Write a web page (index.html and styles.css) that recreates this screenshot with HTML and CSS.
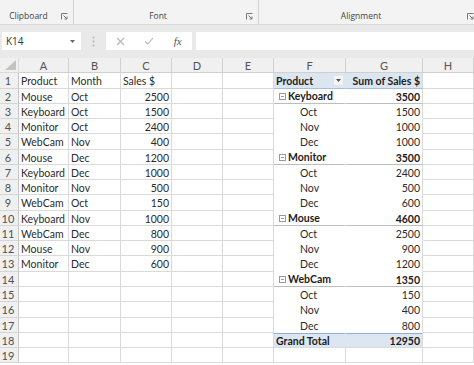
FILE: index.html
```html
<!DOCTYPE html>
<html lang="en">
<head>
<meta charset="UTF-8" />
<meta name="viewport" content="width=device-width, initial-scale=1" />
<title>Pivot Table - Sales</title>
<link rel="stylesheet" href="styles.css">
</head>
<body>

<div class="ribbon">
  <div class="rgroup g1">
    <span class="rlabel">Clipboard</span>
    <svg class="launcher" width="7" height="7" viewBox="0 0 7 7"><path d="M0.5 6.5V0.5H6.5" /><path d="M2.5 2.5L6 6M6 3.5V6H3.5" /></svg>
  </div>
  <div class="rgroup g2">
    <span class="rlabel">Font</span>
    <svg class="launcher" width="7" height="7" viewBox="0 0 7 7"><path d="M0.5 6.5V0.5H6.5" /><path d="M2.5 2.5L6 6M6 3.5V6H3.5" /></svg>
  </div>
  <div class="rgroup g3">
    <span class="rlabel">Alignment</span>
    <svg class="launcher" width="7" height="7" viewBox="0 0 7 7"><path d="M0.5 6.5V0.5H6.5" /><path d="M2.5 2.5L6 6M6 3.5V6H3.5" /></svg>
  </div>
</div>

<div class="fbar">
  <div class="namebox">
    <span>K14</span>
    <svg width="5" height="3" viewBox="0 0 5 3"><path d="M0 0H5L2.5 3Z" fill="#666" /></svg>
  </div>
  <div class="grip">
    <svg width="3" height="11" viewBox="0 0 3 11"><circle cx="1.5" cy="1.5" r="1" /><circle cx="1.5" cy="5.5" r="1" /><circle cx="1.5" cy="9.5" r="1" /></svg>
  </div>
  <div class="fxbox">
    <span class="fxbtn"><svg width="9" height="9" viewBox="0 0 9 9"><path d="M1 1L8 8M8 1L1 8" /></svg></span>
    <span class="fxbtn"><svg width="10" height="8" viewBox="0 0 10 8"><path d="M1 4.5L3.8 7L9 1" /></svg></span>
    <span class="fxbtn fx">fx</span>
  </div>
  <div class="finput"></div>
</div>

<div class="sheet">
  <!-- column headers -->
  <div class="corner"><svg width="11" height="10" viewBox="0 0 11 10"><path d="M11 0V10H0Z" fill="#c3c3c3" /></svg></div>
  <div class="ch">A</div><div class="ch">B</div><div class="ch">C</div><div class="ch">D</div>
  <div class="ch">E</div><div class="ch">F</div><div class="ch">G</div><div class="ch">H</div>

  <div class="rh">1</div>
  <div class="c">Product</div><div class="c">Month</div><div class="c">Sales $</div><div class="c"></div><div class="c"></div>
  <div class="c pf ph"><span>Product</span><span class="dd"><svg width="5" height="3" viewBox="0 0 5 3"><path d="M0 0H5L2.5 3Z" fill="#555" /></svg></span></div>
  <div class="c pg ph">Sum of Sales $</div><div class="c"></div>

  <div class="rh">2</div>
  <div class="c">Mouse</div><div class="c">Oct</div><div class="c r">2500</div><div class="c"></div><div class="c"></div>
  <div class="c pf grp"><svg class="minus" width="7" height="7" viewBox="0 0 7 7"><rect x="0.5" y="0.5" width="6" height="6" /><path d="M2 3.5H5" /></svg>Keyboard</div>
  <div class="c pg grp">3500</div><div class="c"></div>

  <div class="rh">3</div>
  <div class="c">Keyboard</div><div class="c">Oct</div><div class="c r">1500</div><div class="c"></div><div class="c"></div>
  <div class="c pf sub">Oct</div><div class="c pg">1500</div><div class="c"></div>

  <div class="rh">4</div>
  <div class="c">Monitor</div><div class="c">Oct</div><div class="c r">2400</div><div class="c"></div><div class="c"></div>
  <div class="c pf sub">Nov</div><div class="c pg">1000</div><div class="c"></div>

  <div class="rh">5</div>
  <div class="c">WebCam</div><div class="c">Nov</div><div class="c r">400</div><div class="c"></div><div class="c"></div>
  <div class="c pf sub">Dec</div><div class="c pg">1000</div><div class="c"></div>

  <div class="rh">6</div>
  <div class="c">Mouse</div><div class="c">Dec</div><div class="c r">1200</div><div class="c"></div><div class="c"></div>
  <div class="c pf grp"><svg class="minus" width="7" height="7" viewBox="0 0 7 7"><rect x="0.5" y="0.5" width="6" height="6" /><path d="M2 3.5H5" /></svg>Monitor</div>
  <div class="c pg grp">3500</div><div class="c"></div>

  <div class="rh">7</div>
  <div class="c">Keyboard</div><div class="c">Dec</div><div class="c r">1000</div><div class="c"></div><div class="c"></div>
  <div class="c pf sub">Oct</div><div class="c pg">2400</div><div class="c"></div>

  <div class="rh">8</div>
  <div class="c">Monitor</div><div class="c">Nov</div><div class="c r">500</div><div class="c"></div><div class="c"></div>
  <div class="c pf sub">Nov</div><div class="c pg">500</div><div class="c"></div>

  <div class="rh">9</div>
  <div class="c">WebCam</div><div class="c">Oct</div><div class="c r">150</div><div class="c"></div><div class="c"></div>
  <div class="c pf sub">Dec</div><div class="c pg">600</div><div class="c"></div>

  <div class="rh">10</div>
  <div class="c">Keyboard</div><div class="c">Nov</div><div class="c r">1000</div><div class="c"></div><div class="c"></div>
  <div class="c pf grp"><svg class="minus" width="7" height="7" viewBox="0 0 7 7"><rect x="0.5" y="0.5" width="6" height="6" /><path d="M2 3.5H5" /></svg>Mouse</div>
  <div class="c pg grp">4600</div><div class="c"></div>

  <div class="rh">11</div>
  <div class="c">WebCam</div><div class="c">Dec</div><div class="c r">800</div><div class="c"></div><div class="c"></div>
  <div class="c pf sub">Oct</div><div class="c pg">2500</div><div class="c"></div>

  <div class="rh">12</div>
  <div class="c">Mouse</div><div class="c">Nov</div><div class="c r">900</div><div class="c"></div><div class="c"></div>
  <div class="c pf sub">Nov</div><div class="c pg">900</div><div class="c"></div>

  <div class="rh">13</div>
  <div class="c">Monitor</div><div class="c">Dec</div><div class="c r">600</div><div class="c"></div><div class="c"></div>
  <div class="c pf sub">Dec</div><div class="c pg">1200</div><div class="c"></div>

  <div class="rh">14</div>
  <div class="c"></div><div class="c"></div><div class="c"></div><div class="c"></div><div class="c"></div>
  <div class="c pf grp"><svg class="minus" width="7" height="7" viewBox="0 0 7 7"><rect x="0.5" y="0.5" width="6" height="6" /><path d="M2 3.5H5" /></svg>WebCam</div>
  <div class="c pg grp">1350</div><div class="c"></div>

  <div class="rh">15</div>
  <div class="c"></div><div class="c"></div><div class="c"></div><div class="c"></div><div class="c"></div>
  <div class="c pf sub">Oct</div><div class="c pg">150</div><div class="c"></div>

  <div class="rh">16</div>
  <div class="c"></div><div class="c"></div><div class="c"></div><div class="c"></div><div class="c"></div>
  <div class="c pf sub">Nov</div><div class="c pg">400</div><div class="c"></div>

  <div class="rh">17</div>
  <div class="c"></div><div class="c"></div><div class="c"></div><div class="c"></div><div class="c"></div>
  <div class="c pf sub">Dec</div><div class="c pg">800</div><div class="c"></div>

  <div class="rh">18</div>
  <div class="c"></div><div class="c"></div><div class="c"></div><div class="c"></div><div class="c"></div>
  <div class="c pf tot">Grand Total</div><div class="c pg tot">12950</div><div class="c"></div>

  <div class="rh">19</div>
  <div class="c"></div><div class="c"></div><div class="c"></div><div class="c"></div><div class="c"></div>
  <div class="c"></div><div class="c"></div><div class="c"></div>
</div>

</body>
</html>
```

FILE: styles.css
```css
* {
  box-sizing: border-box;
}
body {
  margin: 0;
  width: 474px;
  height: 365px;
  overflow: hidden;
  background: #fff;
  font-family: Lato, 'Liberation Sans', sans-serif;
  color: #2b2b2b;
}

/* Ribbon group labels */
.ribbon {
  display: flex;
  height: 25px;
  background: #f3f3f3;
  border-bottom: 1px solid #d9d9d9;
  overflow: hidden;
}
.rgroup {
  display: flex;
  align-items: flex-end;
  flex-shrink: 0;
  padding-bottom: 3px;
  border-right: 1px solid #d2d2d2;
}
.g1 { width: 74px; }
.g2 { width: 185px; }
.g3 { width: 221px; }
.rlabel {
  flex: 1;
  text-align: center;
  font-family: 'Open Sans', sans-serif;
  font-size: 8.5px;
  line-height: 10px;
  color: #444;
  padding-right: 4px;
}
.launcher {
  margin: 0 5px 1px 0;
  fill: none;
  stroke: #7a7a7a;
  stroke-width: 1;
}

/* Formula bar */
.fbar {
  display: flex;
  align-items: flex-start;
  height: 33px;
  padding: 7px 0 0 2px;
  background: #e9e9e9;
}
.namebox {
  width: 79px;
  height: 18px;
  background: #fff;
  display: flex;
  align-items: center;
  justify-content: space-between;
  padding: 0 6px 0 4px;
  font-family: 'Open Sans', sans-serif;
  font-size: 10px;
  color: #333;
}
.grip {
  width: 25px;
  height: 18px;
  display: flex;
  align-items: center;
  justify-content: center;
  fill: #b5b5b5;
}
.fxbox {
  width: 86px;
  height: 18px;
  background: #fff;
  display: flex;
  align-items: center;
}
.fxbtn {
  width: 29px;
  display: flex;
  justify-content: center;
}
.fxbtn svg {
  fill: none;
  stroke: #b4b4b4;
  stroke-width: 1.1;
}
.fx {
  font-family: 'Liberation Serif', serif;
  font-style: italic;
  font-size: 11px;
  color: #555;
}
.finput {
  flex: 1;
  height: 18px;
  margin-left: 4px;
  background: #fff;
}

/* Grid */
.sheet {
  display: grid;
  grid-template-columns: 19px 50px 52px 51px 51px 51px 72px 77px 51px;
  grid-template-rows: 15.3px;
  grid-auto-rows: 15.28px;
  font-size: 10.5px;
}
.sheet > div {
  border-right: 1px solid #dadada;
  border-bottom: 1px solid #dadada;
  line-height: 14px;
  padding-top: 1px;
  white-space: nowrap;
  overflow: hidden;
}
.corner {
  background: #f0f0f0;
  display: flex;
  align-items: flex-end;
  justify-content: flex-end;
  padding: 0 2px 2px 0 !important;
}
.ch {
  background: #f0f0f0;
  text-align: center;
  color: #555;
  font-size: 11px;
  border-color: #d0d0d0 !important;
}
.rh {
  background: #f0f0f0;
  text-align: center;
  padding-right: 2px;
  color: #505050;
  font-size: 11px;
  border-bottom-color: #d6d6d6 !important;
  border-right-color: #c6c6c6 !important;
}
.c {
  padding-left: 2px;
  padding-right: 2px;
}
.r {
  text-align: right;
}

/* Pivot table */
.pf {
  border-right-color: transparent !important;
  border-bottom-color: transparent !important;
}
.pg {
  text-align: right;
  border-bottom-color: transparent !important;
}
.ph {
  background: #dce6f1;
  font-weight: 700;
  color: #1d1d1d;
  border-bottom-color: #a7bddc !important;
}
.pf.ph {
  display: flex;
  align-items: center;
  justify-content: space-between;
}
.dd {
  width: 9px;
  height: 9px;
  background: #f3f4f6;
  display: flex;
  align-items: center;
  justify-content: center;
}
.grp {
  font-weight: 700;
  color: #1d1d1d;
  border-bottom-color: #bdbdbd !important;
}
.pf.grp {
  display: flex;
  align-items: center;
  padding-left: 5px;
}
.minus {
  margin-right: 2px;
  fill: none;
  stroke: #9a9a9a;
  stroke-width: 1;
}
.sub {
  padding-left: 26px;
}
.tot {
  background: #dce6f1;
  font-weight: 700;
  color: #1d1d1d;
  box-shadow: inset 0 1px 0 #93aed6;
  border-bottom-color: #dadada !important;
}
```
